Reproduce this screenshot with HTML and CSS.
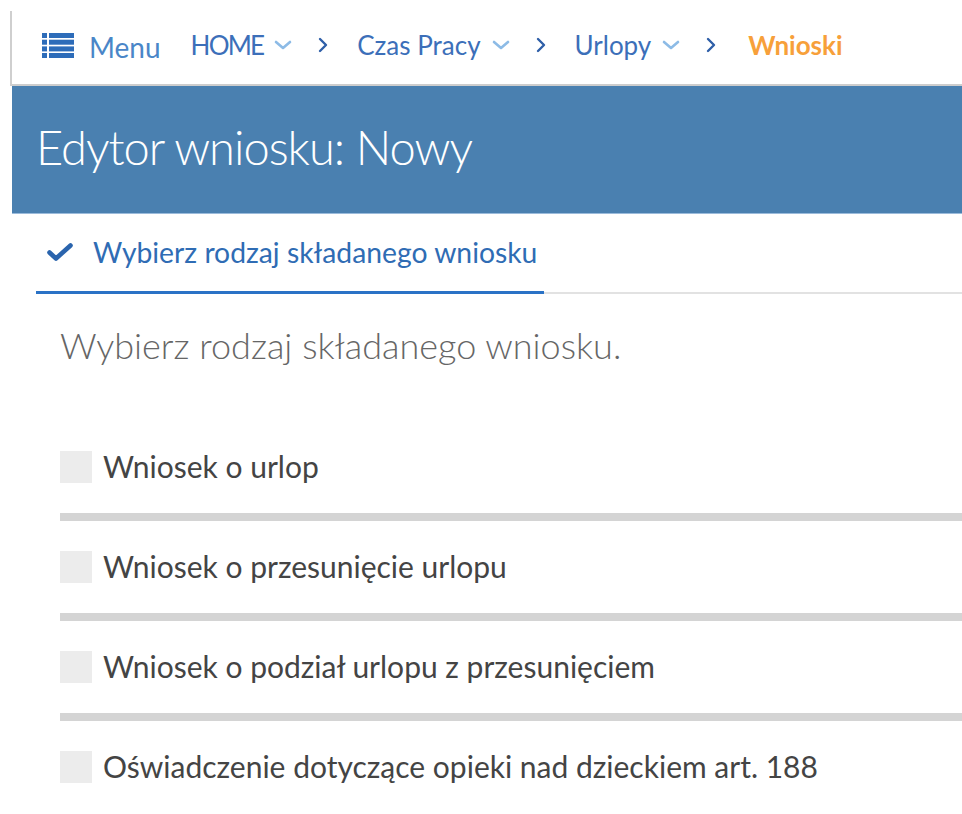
FILE: index.html
```html
<!DOCTYPE html>
<html lang="pl">
<head>
<meta charset="utf-8">
<title>Edytor wniosku: Nowy</title>
<link rel="stylesheet" href="styles.css">
</head>
<body>
<nav class="topbar">
  <button class="menu-btn" type="button">
    <svg class="menu-icon" viewBox="0 0 32 25" aria-hidden="true">
      <rect x="0" y="0" width="5" height="5"/><rect x="7" y="0" width="25" height="5"/>
      <rect x="0" y="6.7" width="5" height="5"/><rect x="7" y="6.7" width="25" height="5"/>
      <rect x="0" y="13.4" width="5" height="5"/><rect x="7" y="13.4" width="25" height="5"/>
      <rect x="0" y="20" width="5" height="5"/><rect x="7" y="20" width="25" height="5"/>
    </svg>
    <span>Menu</span>
  </button>
  <ol class="crumbs">
    <li class="crumb">
      <a href="#" class="caps">HOME</a>
      <svg class="caret" viewBox="0 0 18 12" aria-hidden="true"><path d="M2 3l7 6 7-6"/></svg>
    </li>
    <li class="sep"><svg viewBox="0 0 10 16" aria-hidden="true"><path d="M2 2l6 6-6 6"/></svg></li>
    <li class="crumb">
      <a href="#">Czas Pracy</a>
      <svg class="caret" viewBox="0 0 18 12" aria-hidden="true"><path d="M2 3l7 6 7-6"/></svg>
    </li>
    <li class="sep"><svg viewBox="0 0 10 16" aria-hidden="true"><path d="M2 2l6 6-6 6"/></svg></li>
    <li class="crumb">
      <a href="#">Urlopy</a>
      <svg class="caret" viewBox="0 0 18 12" aria-hidden="true"><path d="M2 3l7 6 7-6"/></svg>
    </li>
    <li class="sep"><svg viewBox="0 0 10 16" aria-hidden="true"><path d="M2 2l6 6-6 6"/></svg></li>
    <li class="crumb current">Wnioski</li>
  </ol>
</nav>

<header class="page-head">
  <h1>Edytor wniosku: Nowy</h1>
</header>

<div class="steps">
  <div class="step active">
    <svg class="check" viewBox="0 0 26 18" aria-hidden="true"><path d="M2.5 9.5l6.5 6 14.5-13"/></svg>
    <span>Wybierz rodzaj składanego wniosku</span>
  </div>
</div>

<main class="content">
  <h2 class="lead">Wybierz rodzaj składanego wniosku.</h2>
  <ul class="options">
    <li class="option"><span class="box"></span><span class="label">Wniosek o urlop</span></li>
    <li class="option"><span class="box"></span><span class="label">Wniosek o przesunięcie urlopu</span></li>
    <li class="option"><span class="box"></span><span class="label">Wniosek o podział urlopu z przesunięciem</span></li>
    <li class="option"><span class="box"></span><span class="label">Oświadczenie dotyczące opieki nad dzieckiem art. 188</span></li>
  </ul>
</main>
</body>
</html>
```

FILE: styles.css
```css
* { box-sizing: border-box; }

html, body {
  margin: 0;
  padding: 0;
  background: #fff;
  font-family: Lato, "Open Sans", "Liberation Sans", sans-serif;
  overflow: hidden;
}

body { padding-top: 11px; }

/* top navigation bar */
.topbar {
  margin-left: 10px;
  height: 75px;
  border-left: 2px solid #cfcfcf;
  border-bottom: 2px solid #cdcdcd;
  display: flex;
  align-items: center;
  padding-left: 30px;
  padding-bottom: 5px;
}

.menu-btn {
  display: flex;
  align-items: center;
  gap: 15px;
  border: 0;
  background: none;
  padding: 0;
  font: inherit;
  font-size: 28px;
  color: #4a86c8;
  cursor: pointer;
}
.menu-btn span { position: relative; top: 2px; }

.menu-icon { width: 32px; height: 25px; fill: #2d6cb9; }

.crumbs {
  display: flex;
  align-items: center;
  list-style: none;
  margin: 0 0 0 30px;
  padding: 0;
  font-size: 26px;
}

.crumb { display: flex; align-items: center; gap: 11px; }
.crumb a { color: #3c6fb9; text-decoration: none; }
.crumb a.caps { letter-spacing: -1.8px; }
.crumb.current { color: #f7a03a; font-weight: 700; margin-left: 3px; }

.caret {
  width: 18px;
  height: 12px;
  fill: none;
  stroke: #8dbbe6;
  stroke-width: 2.6;
  stroke-linecap: round;
  stroke-linejoin: round;
}

.sep { display: flex; margin: 0 29px 0 26px; }
.sep svg {
  width: 10px;
  height: 16px;
  fill: none;
  stroke: #2f5fa8;
  stroke-width: 2.4;
  stroke-linecap: round;
  stroke-linejoin: round;
}

/* page title band */
.page-head {
  margin-left: 12px;
  height: 128px;
  background: #4a80b0;
  border-bottom: 1px solid #9bbbdb;
  display: flex;
  align-items: center;
  padding-left: 24px;
}

.page-head h1 {
  margin: 0;
  color: #fff;
  font-weight: 300;
  font-size: 47px;
  letter-spacing: -1px;
  position: relative;
  top: -3px;
}

/* wizard steps */
.steps {
  margin-left: 36px;
  height: 80px;
  border-bottom: 2px solid #e2e2e2;
  display: flex;
}

.step {
  display: flex;
  align-items: center;
  gap: 20px;
  padding-left: 11px;
  width: 508px;
  margin-bottom: -2px;
  border-bottom: 3px solid #2a72c6;
  color: #2f6cb4;
  font-size: 28.3px;
  padding-bottom: 2px;
}

.check {
  width: 26px;
  height: 18px;
  fill: none;
  stroke: #2a64ad;
  stroke-width: 4.6;
  stroke-linecap: round;
  stroke-linejoin: round;
}

/* request type list */
.content { padding-left: 60px; }

.lead {
  margin: 25px 0 0;
  font-weight: 300;
  font-size: 36px;
  color: #666;
  line-height: 52px;
}

.options {
  list-style: none;
  margin: 50px 0 0;
  padding: 0;
}

.option {
  display: flex;
  align-items: center;
  gap: 11px;
  height: 100px;
  border-bottom: 8px solid #d4d4d4;
}
.option:last-child { border-bottom: 0; height: 92px; }

.box {
  width: 32px;
  height: 32px;
  background: #ececec;
  flex: none;
}

.label {
  font-size: 30px;
  color: #444;
  position: relative;
  top: -1px;
}
```
